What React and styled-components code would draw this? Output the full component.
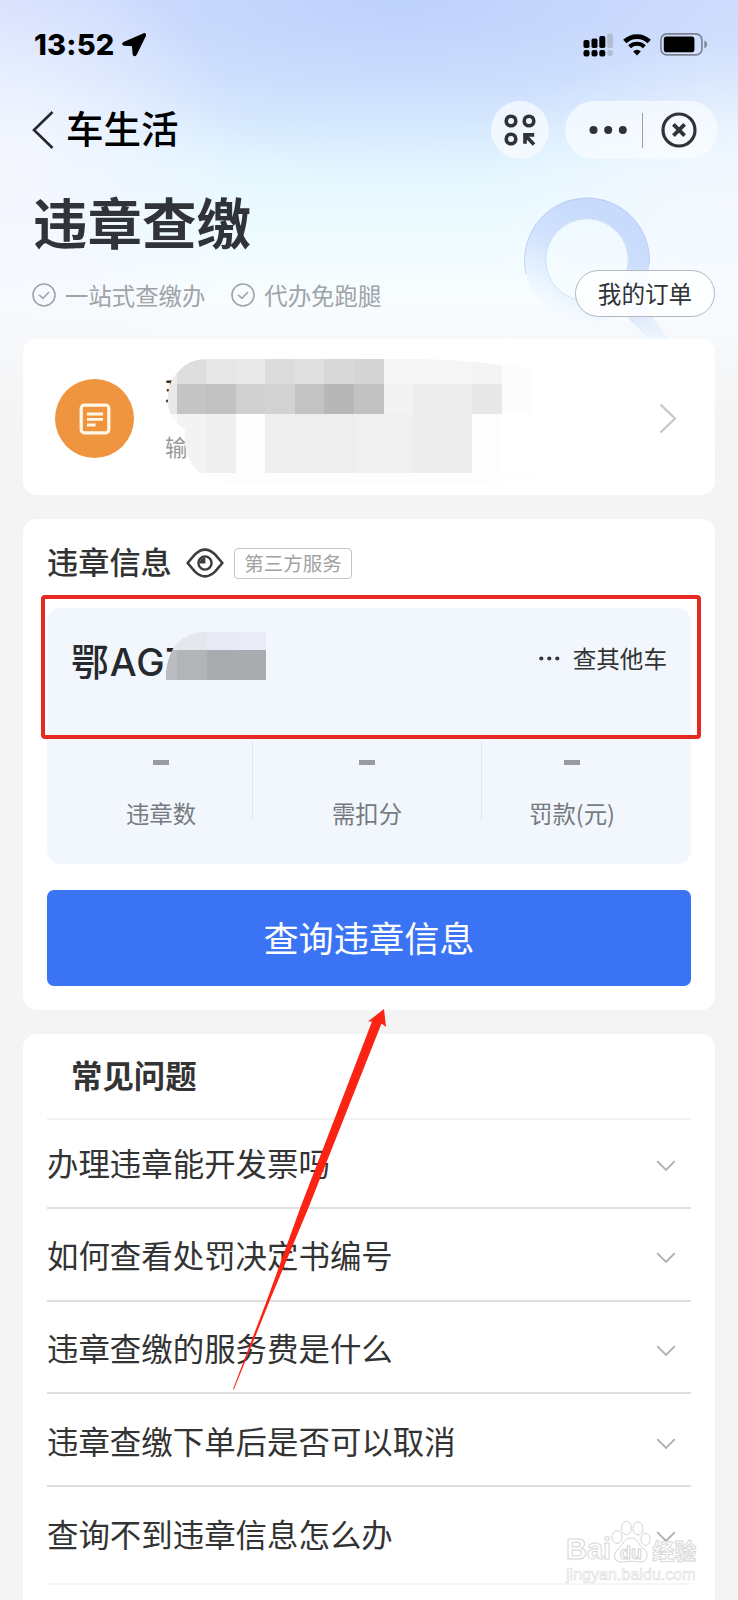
import styled, { createGlobalStyle } from "styled-components";

const questions = [
  "办理违章能开发票吗",
  "如何查看处罚决定书编号",
  "违章查缴的服务费是什么",
  "违章查缴下单后是否可以取消",
  "查询不到违章信息怎么办",
];

const counts = ["违章数", "需扣分", "罚款(元)"];

// [x, y, width, height, color]
const titleMask = [
  [0, 54, 12, 60, "#fafafa"], [2, 0, 10, 25, "#ededed"],
  [12, 0, 29.5, 25, "#dedede"], [41, 0, 30, 25, "#e7e7e7"], [71, 0, 30, 25, "#e9e9e9"],
  [100, 0, 30, 25, "#dcdcdc"], [130, 0, 30, 25, "#e0e0e0"], [159, 0, 30, 25, "#d8d8d8"],
  [189, 0, 30, 25, "#d5d5d5"], [219, 0, 89, 25, "#f6f6f6"], [307, 0, 30, 25, "#f4f4f4"],
  [337, 7, 30, 48, "#fcfcfc"],
  [2, 25, 10, 30, "#e9e9e9"], [12, 25, 30, 30, "#c4c4c4"], [41, 25, 30, 30, "#c1c1c1"],
  [71, 25, 30, 30, "#d0d0d0"], [100, 25, 30, 30, "#d2d2d2"], [130, 25, 30, 30, "#c3c3c3"],
  [159, 25, 30, 30, "#b7b7b7"], [189, 25, 30, 30, "#c2c2c2"], [219, 25, 30, 30, "#f3f3f3"],
  [248, 25, 59, 30, "#ededed"], [307, 25, 30, 30, "#e7e7e7"],
  [12, 55, 29, 59, "#f3f3f3"], [41, 55, 30, 59, "#efefef"], [71, 55, 30, 59, "#fefefe"],
  [100, 55, 89, 59, "#eeeeee"], [189, 55, 59, 59, "#f0f0f0"], [248, 55, 59, 59, "#ededed"],
  [307, 55, 30, 59, "#fdfdfd"], [30, 114, 337, 10, "#fdfdfd"],
];

const plateMask = [
  [0, 0, 41, 18, "#e4e7ee"], [41, 0, 30, 18, "#e8ebf6"], [71, 0, 29, 18, "#e9ecf7"],
  [0, 18, 11, 30, "#b9bdc1"], [11, 18, 30, 30, "#b2b5b8"], [41, 18, 59, 30, "#a9acae"],
];

const Mosaic = ({ cells }) => (
  <g shapeRendering="crispEdges">
    {cells.map(([x, y, w, h, fill], i) => (
      <rect key={i} x={x} y={y} width={w} height={h} fill={fill} />
    ))}
  </g>
);

const CheckIcon = () => (
  <svg width="24" height="24" viewBox="0 0 24 24" fill="none" stroke="#a0a3a8" strokeWidth="1.6">
    <circle cx="12" cy="12" r="11" />
    <path d="M7 11.8l4 3.6 6-6.4" />
  </svg>
);

const App = () => {
  return (
    <>
      <GlobalStyle />
      <Page>
        <StatusBar>
          <Clock>13:52</Clock>
          <svg width="26" height="26" viewBox="0 0 26 26">
            <path d="M23 2.2L3 10.8Q1.2 12 3.2 12.8L11.8 13.2L12.6 22Q13.2 24.4 14.8 22.4L24 3.6Q24.4 1.6 23 2.2Z" stroke="#000" strokeWidth="2" strokeLinejoin="round" />
          </svg>
          <StatusIcons>
            <svg width="31" height="24" viewBox="0 0 31 24">
              <rect x="0.5" y="7" width="6" height="8" rx="1.8" />
              <rect x="8.5" y="5.5" width="6" height="9.5" rx="1.8" />
              <rect x="16.3" y="3" width="6" height="12" rx="1.8" />
              <rect x="24.3" y="0.5" width="5.6" height="14.5" rx="1.8" fill="#b3bdd0" />
              <rect x="0.5" y="17" width="6" height="6.4" rx="2.2" />
              <rect x="8.5" y="17" width="6" height="6.4" rx="2.2" />
              <rect x="16.3" y="17" width="6" height="6.4" rx="2.2" />
              <rect x="24.3" y="17" width="5.6" height="6" rx="2.2" fill="#b3bdd0" />
            </svg>
            <svg width="28" height="22" viewBox="0 0 28 22" fill="none" stroke="#000">
              <path d="M1.8 7.6A17.6 17.6 0 0 1 26.2 7.6" strokeWidth="4.8" />
              <path d="M6.6 12.8A10.8 10.8 0 0 1 21.4 12.8" strokeWidth="4" />
              <path d="M14 21.4L10.2 17.4A5.4 5.4 0 0 1 17.8 17.4Z" fill="#000" stroke="none" />
            </svg>
            <svg width="48" height="23" viewBox="0 0 48 23">
              <rect x="0.9" y="0.9" width="41" height="21" rx="6" fill="none" stroke="#7d8490" strokeWidth="1.6" />
              <rect x="3.8" y="3.6" width="30.6" height="15.6" rx="2.8" />
              <path d="M44.4 7.6Q47 8.6 47 11.4T44.4 15.2Z" fill="#7d8490" />
            </svg>
          </StatusIcons>
        </StatusBar>

        <NavBar>
          <svg width="22" height="38" viewBox="0 0 22 38" fill="none" stroke="#26282c" strokeWidth="2.6">
            <path d="M20.5 1L2 19l18.5 18" />
          </svg>
          <NavTitle>车生活</NavTitle>
          <ScanButton>
            <svg width="32" height="32" viewBox="0 0 32 32" fill="none" stroke="#303236" strokeWidth="3.6">
              <circle cx="7" cy="7" r="4.8" />
              <circle cx="25" cy="7" r="4.8" />
              <circle cx="7" cy="25" r="4.8" />
              <path d="M30 30.4L21.6 21.8M21 29.8V20.9H30.2" strokeWidth="3.6" />
            </svg>
          </ScanButton>
          <Capsule>
            <svg width="38" height="10" viewBox="0 0 38 10" fill="#303236">
              <circle cx="4.5" cy="5" r="4" />
              <circle cx="19.2" cy="5" r="4" />
              <circle cx="33.8" cy="5" r="4" />
            </svg>
            <CapsuleLine />
            <svg width="36" height="36" viewBox="0 0 36 36" fill="none" stroke="#303236" strokeWidth="3.2">
              <circle cx="18" cy="18" r="16" />
              <path d="M12.4 12.4l11.2 11.2M23.6 12.4L12.4 23.6" strokeWidth="3.8" />
            </svg>
          </Capsule>
        </NavBar>

        <Hero>
          <HeroText>
            <HeroTitle>违章查缴</HeroTitle>
            <Features>
              <Feature><CheckIcon />一站式查缴办</Feature>
              <Feature><CheckIcon />代办免跑腿</Feature>
            </Features>
          </HeroText>
          <Magnifier width="150" height="142" viewBox="0 0 150 142">
            <defs>
              <linearGradient id="ring" x1="0.75" y1="0.1" x2="0.3" y2="1">
                <stop offset="0" stopColor="#c8dafd" />
                <stop offset="0.45" stopColor="#d0e2fd" />
                <stop offset="0.85" stopColor="#ebf5ff" />
                <stop offset="1" stopColor="#f4faff" />
              </linearGradient>
              <linearGradient id="grip" x1="0" y1="0" x2="0.6" y2="1">
                <stop offset="0" stopColor="#d5e1fb" />
                <stop offset="1" stopColor="#edf4fe" />
              </linearGradient>
            </defs>
            <path d="M104 118L122 106L142 134L148 142H128Z" fill="url(#grip)" />
            <circle cx="67" cy="64" r="52" fill="none" stroke="url(#ring)" strokeWidth="21" />
            <path d="M6 78A62.5 62.5 0 1 1 129.5 68" fill="none" stroke="#b9cdee" strokeWidth="0.8" />
            <circle cx="67" cy="64" r="41.2" fill="none" stroke="#c6d9f2" strokeWidth="0.8" />
          </Magnifier>
          <OrderButton>我的订单</OrderButton>
        </Hero>

        <TicketCard>
          <TicketIcon>
            <svg width="32" height="32" viewBox="0 0 32 32" fill="none" stroke="#fff8e6">
              <rect x="2.2" y="2.2" width="27.6" height="27.6" rx="3" strokeWidth="3.2" />
              <path d="M8 11h16M8 16.4h16M8 22h8.6" strokeWidth="2.8" />
            </svg>
          </TicketIcon>
          <TicketText>
            <TicketTitle>现</TicketTitle>
            <TicketSub>输</TicketSub>
            <TicketMask width="367" height="124" viewBox="0 0 367 124">
              <clipPath id="titleClip">
                <path d="M3 44Q2 22 14 12Q24 0 42 0H260Q310 2 334 6L367 9V118Q340 124 300 124H70Q34 122 24 100Q18 86 20 70Q4 62 3 44Z" />
              </clipPath>
              <g clipPath="url(#titleClip)"><Mosaic cells={titleMask} /></g>
            </TicketMask>
          </TicketText>
          <svg width="18" height="31" viewBox="0 0 18 31" fill="none" stroke="#c6c6c6" strokeWidth="2.2">
            <path d="M1.5 1.5L16 15.5L1.5 29.5" />
          </svg>
        </TicketCard>

        <InfoCard>
          <InfoHead>
            <InfoTitle>违章信息</InfoTitle>
            <svg width="38" height="30" viewBox="0 0 38 30" fill="none" stroke="#3a3c40" strokeWidth="2.6">
              <path d="M1.6 15L9 6.4Q14 1.6 19 1.6T29 6.4L36.4 15L29 23.6Q24 28.4 19 28.4T9 23.6Z" strokeLinejoin="round" />
              <circle cx="19" cy="15" r="6.6" strokeWidth="2.4" />
              <path d="M19.4 9.4V15.4H13.4A6 6 0 0 1 19.4 9.4Z" fill="#3a3c40" stroke="none" />
            </svg>
            <Tag>第三方服务</Tag>
          </InfoHead>
          <CarPanel>
            <CarRow>
              <Plate>
                鄂AG7
                <PlateMask width="100" height="48" viewBox="0 0 100 48">
                  <clipPath id="plateClip"><path d="M0 48V40Q4 2 38 0H100V48Z" /></clipPath>
                  <g clipPath="url(#plateClip)"><Mosaic cells={plateMask} /></g>
                </PlateMask>
              </Plate>
              <OtherCar>
                <svg width="21" height="5" viewBox="0 0 21 5" fill="#33363b">
                  <circle cx="2.3" cy="2.5" r="2.1" />
                  <circle cx="10.3" cy="2.5" r="2.1" />
                  <circle cx="18.3" cy="2.5" r="2.1" />
                </svg>
                查其他车
              </OtherCar>
            </CarRow>
            <CountRow>
              {counts.map((name) => (
                <Count key={name}>
                  <Dash />
                  <span>{name}</span>
                </Count>
              ))}
            </CountRow>
            <Highlight />
          </CarPanel>
          <QueryButton>查询违章信息</QueryButton>
        </InfoCard>

        <FaqCard>
          <FaqTitle>常见问题</FaqTitle>
          {questions.map((q, i) => (
            <FaqRow key={q} $first={i === 0} $last={i === questions.length - 1}>
              <span>{q}</span>
              <svg width="20" height="12" viewBox="0 0 20 12" fill="none" stroke="#b0b0b0" strokeWidth="1.9">
                <path d="M1.2 1.2L10 10L18.8 1.2" />
              </svg>
            </FaqRow>
          ))}
        </FaqCard>

        <Arrow width="160" height="386" viewBox="0 0 160 386">
          <path d="M154 3L156 21L151.5 17.5L78.4 202L40 294L3.9 383.6L3 383.2L37 294L70.2 202L142 15.5L138 15.5Z" fill="#fb2314" />
        </Arrow>

        <Watermark>
          <WatermarkLogo>
            Bai
            <svg width="40" height="44" viewBox="0 0 40 44" fill="#fff" stroke="#d4d4d4" strokeWidth="1">
              <ellipse cx="6" cy="17" rx="5" ry="6.4" />
              <ellipse cx="15.4" cy="8" rx="5" ry="6.8" />
              <ellipse cx="27" cy="8.4" rx="5" ry="6.6" />
              <ellipse cx="34.6" cy="19.4" rx="4.6" ry="6" />
              <path d="M20 18C27 18 27 25 33 29C39 34 36 43 28 42C22 41 18 41 12 42C3 43 1 35 7 29C13 24 13 18 20 18Z" />
              <text x="20" y="38.5" textAnchor="middle" fontSize="18" fontWeight="700">du</text>
            </svg>
            <WatermarkCn>经验</WatermarkCn>
          </WatermarkLogo>
          <WatermarkUrl>jingyan.baidu.com</WatermarkUrl>
        </Watermark>
      </Page>
    </>
  );
};
export default App;

const GlobalStyle = createGlobalStyle`
  body{
    margin: 0;
    background-color: #f4f4f4;
    overflow: hidden;
  }
  *{
    box-sizing: border-box;
  }
  svg{
    display: block;
    flex-shrink: 0;
  }
`;

const Page = styled.div`
  position: relative;
  width: 738px;
  height: 1600px;
  overflow: hidden;
  padding: 0 23px;
  font-family: "Noto Sans CJK SC", sans-serif;
  color: #333;
  background:
    linear-gradient(to bottom, rgba(244,244,244,0) 290px, #f4f4f4 450px),
    radial-gradient(ellipse 250px 230px at 0 180px, rgba(246,246,255,0.95), rgba(246,246,255,0) 100%),
    radial-gradient(ellipse 260px 160px at 738px 200px, rgba(247,248,255,0.8), rgba(247,248,255,0) 100%),
    radial-gradient(ellipse 560px 180px at 400px 0, rgba(182,204,252,0.8), rgba(182,204,252,0) 100%),
    linear-gradient(to bottom, #dbe3fe 0, #dbeafe 80px, #e2f5ff 150px, #ebfaff 220px, #f7fdff 290px, #f8fcff 340px, #f4f4f4 450px);
`;

const StatusBar = styled.div`
  display: flex;
  align-items: center;
  height: 89px;
  padding-left: 11px;
  padding-right: 7px;
`;

const Clock = styled.div`
  font-family: Inter, sans-serif;
  font-weight: 800;
  font-size: 29px;
  letter-spacing: 0.2px;
  width: 87px;
  color: #000;
`;

const StatusIcons = styled.div`
  display: flex;
  align-items: center;
  gap: 9px;
  margin-left: auto;
`;

const NavBar = styled.div`
  display: flex;
  align-items: center;
  height: 58px;
  margin-top: 12px;
  padding-left: 9px;
`;

const NavTitle = styled.div`
  margin-left: 12px;
  padding-bottom: 6px;
  font-size: 37.5px;
  line-height: 54px;
  font-weight: 500;
  color: #000;
`;

const ScanButton = styled.div`
  display: flex;
  align-items: center;
  justify-content: center;
  width: 58px;
  height: 58px;
  margin-left: auto;
  margin-right: 16px;
  border-radius: 50%;
  background-color: rgba(250,252,255,0.72);
`;

const Capsule = styled.div`
  display: flex;
  align-items: center;
  width: 153px;
  height: 58px;
  padding-left: 24px;
  margin-right: -3px;
  border-radius: 29px;
  background-color: rgba(250,252,255,0.72);
`;

const CapsuleLine = styled.div`
  width: 1px;
  height: 35px;
  margin-left: 15px;
  margin-right: 18px;
  background-color: #9a9da3;
`;

const Hero = styled.div`
  position: relative;
  height: 180px;
`;

const HeroText = styled.div`
  padding: 22px 0 0 10px;
`;

const HeroTitle = styled.div`
  font-size: 54.5px;
  line-height: 80px;
  font-weight: 700;
  color: #303338;
`;

const Features = styled.div`
  display: flex;
  gap: 26px;
  margin-top: 16px;
  margin-left: -1px;
`;

const Feature = styled.div`
  display: flex;
  align-items: center;
  gap: 9px;
  font-size: 23.4px;
  line-height: 36px;
  color: #a0a3a8;
`;

const Magnifier = styled.svg`
  position: absolute;
  top: 37px;
  left: 497px;
`;

const OrderButton = styled.div`
  position: absolute;
  top: 111px;
  right: 0;
  width: 140px;
  height: 47px;
  border: 1px solid #b4b8be;
  border-radius: 24px;
  background-color: rgba(255,255,255,0.85);
  text-align: center;
  font-size: 23.6px;
  line-height: 45px;
  color: #2f3236;
`;

const Card = styled.div`
  border-radius: 14px;
  background-color: #fff;
`;

const TicketCard = styled(Card)`
  position: relative;
  display: flex;
  align-items: center;
  height: 156px;
  padding: 3px 38px 0 32px;
`;

const TicketIcon = styled.div`
  display: flex;
  align-items: center;
  justify-content: center;
  width: 79px;
  height: 79px;
  border-radius: 50%;
  background-color: #f0953f;
`;

const TicketText = styled.div`
  position: relative;
  flex: 1;
  margin-left: 31px;
`;

const TicketTitle = styled.div`
  height: 42px;
  font-size: 28px;
  line-height: 32px;
  font-weight: 500;
`;

const TicketSub = styled.div`
  margin-top: 12px;
  font-size: 22.5px;
  line-height: 34px;
  color: #999;
`;

const TicketMask = styled.svg`
  position: absolute;
  top: -16px;
  left: 0;
`;

const InfoCard = styled(Card)`
  height: 491px;
  margin-top: 24px;
  padding: 21px 24px 0;
`;

const InfoHead = styled.div`
  display: flex;
  align-items: center;
  height: 46px;
`;

const InfoTitle = styled.div`
  width: 139px;
  padding-bottom: 5px;
  font-size: 31.2px;
  line-height: 41px;
  font-weight: 500;
`;

const Tag = styled.div`
  width: 118px;
  height: 31px;
  margin-left: 10px;
  border: 1.5px solid #c4c4c4;
  border-radius: 4px;
  text-align: center;
  font-size: 19.5px;
  line-height: 28px;
  color: #a2a2a2;
`;

const CarPanel = styled.div`
  position: relative;
  height: 256px;
  margin-top: 22px;
  border-radius: 14px;
  background-color: #f2f7fd;
`;

const CarRow = styled.div`
  display: flex;
  align-items: center;
  justify-content: space-between;
  height: 133px;
  padding: 0 24px 29px;
`;

const Plate = styled.div`
  position: relative;
  padding-top: 4px;
  font-family: Inter, "Noto Sans CJK SC", sans-serif;
  font-size: 38px;
  line-height: 56px;
  letter-spacing: 0.8px;
  font-weight: 500;
  color: #26292d;
`;

const PlateMask = styled.svg`
  position: absolute;
  top: 2px;
  left: 95px;
`;

const OtherCar = styled.div`
  display: flex;
  align-items: center;
  gap: 13px;
  padding-bottom: 4px;
  font-size: 23.6px;
  line-height: 36px;
`;

const CountRow = styled.div`
  display: grid;
  grid-template-columns: 205px 229px 210px;
  height: 79px;
`;

const Count = styled.div`
  display: flex;
  flex-direction: column;
  align-items: center;
  height: 79px;
  padding-top: 19px;
  font-size: 23.4px;
  line-height: 34px;
  color: #777a7e;
  white-space: nowrap;
  & + &{
    border-left: 1px solid #e0e5f0;
  }
  &:first-child{
    padding-left: 23px;
  }
  &:last-child{
    padding-right: 29px;
  }
`;

const Dash = styled.div`
  flex-shrink: 0;
  width: 16px;
  height: 5px;
  margin-bottom: 31px;
  background-color: #999b9e;
`;

const Highlight = styled.div`
  position: absolute;
  top: -13px;
  left: -6px;
  width: 660px;
  height: 144px;
  border: 4px solid #e62a22;
  border-radius: 4px;
`;

const QueryButton = styled.div`
  height: 96px;
  margin-top: 26px;
  border-radius: 7px;
  background-color: #3a74f5;
  text-align: center;
  font-size: 35.2px;
  line-height: 93px;
  color: #fff;
`;

const FaqCard = styled(Card)`
  height: 600px;
  margin-top: 24px;
  padding: 0 24px;
`;

const FaqTitle = styled.div`
  height: 86px;
  padding-left: 24px;
  border-bottom: 2px solid #f1f1f1;
  font-size: 31.4px;
  line-height: 82px;
  font-weight: 700;
`;

const FaqRow = styled.div`
  display: flex;
  align-items: center;
  justify-content: space-between;
  height: ${(props) => (props.$first ? "89px" : props.$last ? "98px" : "92.7px")};
  padding-right: 15px;
  padding-top: ${(props) => (props.$first ? "5px" : "8px")};
  padding-bottom: ${(props) => (props.$last ? "5px" : "0")};
  border-bottom: 2px solid ${(props) => (props.$last ? "#f6f6f6" : "#dfdfdf")};
  font-size: 31.45px;
  line-height: 46px;
  span{
    padding-bottom: 6px;
  }
`;

const Arrow = styled.svg`
  position: absolute;
  top: 1006px;
  left: 230px;
`;

const Watermark = styled.div`
  position: absolute;
  top: 1518px;
  left: 566px;
  width: 134px;
  font-family: "Liberation Sans", sans-serif;
  color: #fff;
  -webkit-text-stroke: 1px #d8d8d8;
`;

const WatermarkLogo = styled.div`
  display: flex;
  align-items: flex-end;
  height: 46px;
  font-size: 29px;
  line-height: 30px;
  font-weight: 700;
`;

const WatermarkCn = styled.div`
  margin-left: 1px;
  font-family: "Noto Sans CJK SC", sans-serif;
  font-size: 22px;
  line-height: 29px;
  white-space: nowrap;
`;

const WatermarkUrl = styled.div`
  font-size: 16.1px;
  line-height: 20px;
  -webkit-text-stroke: 0.6px #dcdcdc;
`;
